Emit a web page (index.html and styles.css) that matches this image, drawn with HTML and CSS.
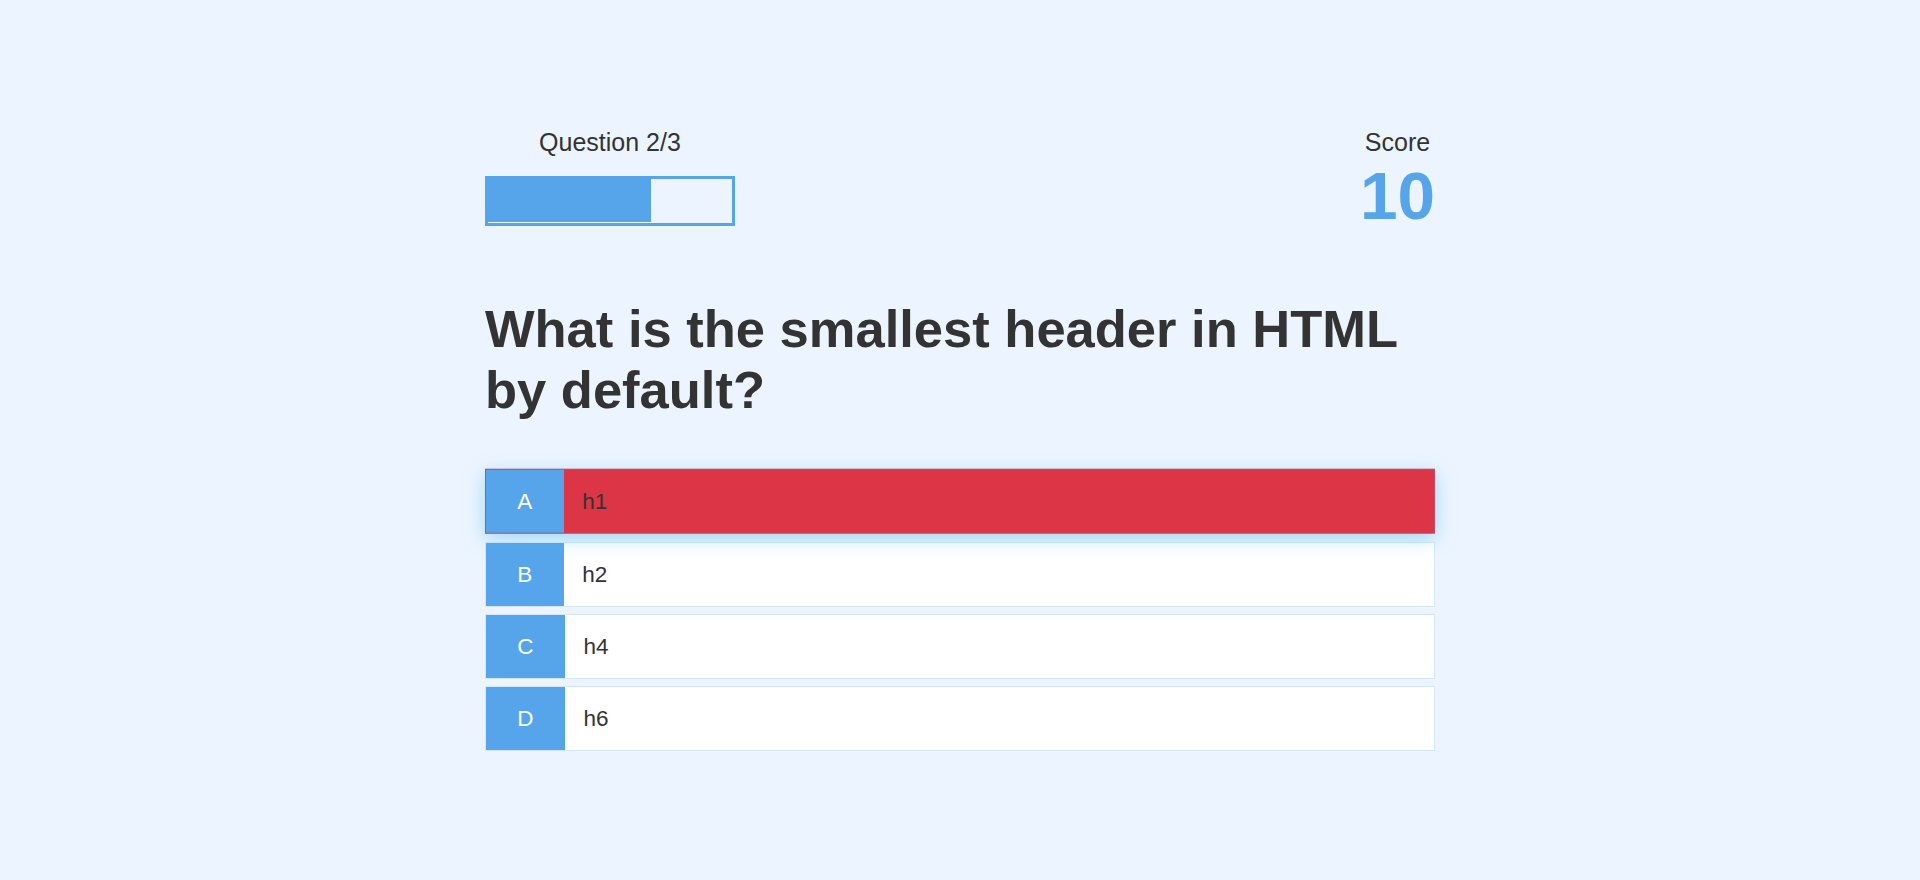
FILE: index.html
```html
<!DOCTYPE html>
<html lang="en">
<head>
<meta charset="utf-8">
<title>Quiz</title>
<link rel="stylesheet" href="styles.css">
</head>
<body>
<div class="container">
  <div class="game">
    <div class="hud">
      <div class="hud-item">
        <p class="hud-prefix">Question 2/3</p>
        <div class="progress-bar"><div class="progress-fill" style="width: 66.67%"></div></div>
      </div>
      <div class="hud-item">
        <p class="hud-prefix">Score</p>
        <h1 class="hud-main-text">10</h1>
      </div>
    </div>
    <h2 class="question">What is the smallest header in HTML by default?</h2>
    <div class="choice-container incorrect">
      <p class="choice-prefix">A</p>
      <p class="choice-text">h1</p>
    </div>
    <div class="choice-container">
      <p class="choice-prefix">B</p>
      <p class="choice-text">h2</p>
    </div>
    <div class="choice-container">
      <p class="choice-prefix">C</p>
      <p class="choice-text">h4</p>
    </div>
    <div class="choice-container">
      <p class="choice-prefix">D</p>
      <p class="choice-text">h6</p>
    </div>
  </div>
</div>
</body>
</html>
```
FILE: styles.css
```css
* {
  box-sizing: border-box;
  margin: 0;
  padding: 0;
  font-family: "Liberation Sans", Arial, Helvetica, sans-serif;
  color: #333;
}

html, body {
  background-color: #ecf5ff;
  width: 1920px;
  height: 880px;
  overflow: hidden;
}

.container {
  width: 950px;
  margin: 0 auto;
  padding-top: 128px;
}

.game {
  display: flex;
  flex-direction: column;
}

.hud {
  display: flex;
  justify-content: space-between;
}

.hud-item {
  display: flex;
  flex-direction: column;
}

.hud-prefix {
  text-align: center;
  font-size: 25px;
  line-height: 28px;
}

.progress-bar {
  width: 250px;
  height: 50px;
  border: 3px solid #56a5eb;
  margin-top: 20px;
}

.progress-fill {
  height: 43px;
  background-color: #56a5eb;
}

.hud-main-text {
  text-align: center;
  font-size: 67.5px;
  line-height: 80px;
  font-weight: 700;
  color: #56a5eb;
  margin-bottom: 62px;
}

.question {
  font-size: 52.5px;
  line-height: 61px;
  font-weight: 700;
  margin-bottom: 49.5px;
}

.choice-container {
  display: flex;
  width: 100%;
  margin-bottom: 7.2px;
  font-size: 22.5px;
  line-height: 25px;
  border: 1.25px solid rgba(86, 165, 235, 0.25);
  background-color: #fff;
}

.choice-prefix {
  padding: 19px 31.25px;
  background-color: #56a5eb;
  color: #fff;
}

.choice-text {
  padding: 19px 18.75px;
  width: 100%;
}

.incorrect {
  background-color: #dc3545;
  box-shadow: 0 5px 17.5px 0 rgba(86, 185, 235, 0.5);
  transform: translateY(-1.25px);
}
```
